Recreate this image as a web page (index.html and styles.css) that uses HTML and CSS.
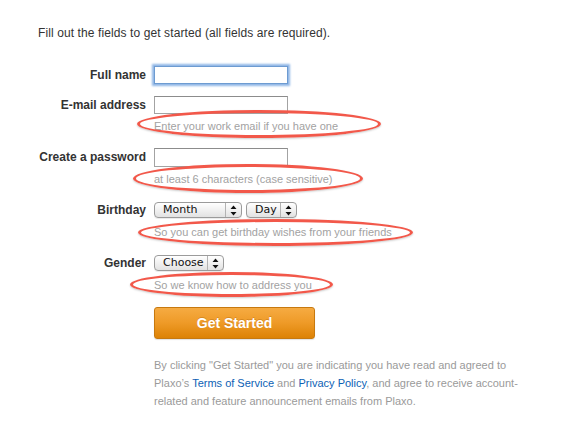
FILE: index.html
```html
<!DOCTYPE html>
<html>
<head>
<meta charset="utf-8">
<link rel="stylesheet" href="styles.css">
</head>
<body>
<div class="page">
  <p class="intro">Fill out the fields to get started (all fields are required).</p>
  <form class="form">
    <div class="row row-name">
      <label class="label">Full name</label>
      <div class="control"><input class="text-input focused" type="text"></div>
    </div>
    <div class="row row-email">
      <label class="label">E-mail address</label>
      <div class="control">
        <input class="text-input" type="text">
        <div class="hint">Enter your work email if you have one<span class="ring ring-email"></span></div>
      </div>
    </div>
    <div class="row row-pass">
      <label class="label">Create a password</label>
      <div class="control">
        <input class="text-input" type="password">
        <div class="hint">at least 6 characters (case sensitive)<span class="ring ring-pass"></span></div>
      </div>
    </div>
    <div class="row row-birth">
      <label class="label">Birthday</label>
      <div class="control">
        <div class="selects">
          <div class="select sel-month"><span class="sel-text">Month</span><span class="sel-arrow"><svg width="7" height="11" viewBox="0 0 7 11"><path d="M3.5 0.5 L6.5 4 H0.5 Z M3.5 10.5 L6.5 7 H0.5 Z" fill="#111"/></svg></span></div>
          <div class="select sel-day"><span class="sel-text">Day</span><span class="sel-arrow"><svg width="7" height="11" viewBox="0 0 7 11"><path d="M3.5 0.5 L6.5 4 H0.5 Z M3.5 10.5 L6.5 7 H0.5 Z" fill="#111"/></svg></span></div>
        </div>
        <div class="hint">So you can get birthday wishes from your friends<span class="ring ring-birth"></span></div>
      </div>
    </div>
    <div class="row row-gender">
      <label class="label">Gender</label>
      <div class="control">
        <div class="selects">
          <div class="select sel-gender"><span class="sel-text">Choose</span><span class="sel-arrow"><svg width="7" height="11" viewBox="0 0 7 11"><path d="M3.5 0.5 L6.5 4 H0.5 Z M3.5 10.5 L6.5 7 H0.5 Z" fill="#111"/></svg></span></div>
        </div>
        <div class="hint">So we know how to address you<span class="ring ring-gender"></span></div>
      </div>
    </div>
    <div class="row row-submit">
      <span class="label"></span>
      <div class="control">
        <button type="button" class="btn">Get Started</button>
        <p class="legal">By clicking "Get Started" you are indicating you have read and agreed to Plaxo’s <a href="#">Terms of Service</a> and <a href="#">Privacy Policy</a>, and agree to receive account-related and feature announcement emails from Plaxo.</p>
      </div>
    </div>
  </form>
</div>
</body>
</html>
```

FILE: styles.css
```css
* { box-sizing: border-box; }
html, body { margin: 0; padding: 0; background: #fff; }
body {
  font-family: "Liberation Sans", Arial, Helvetica, sans-serif;
  color: #333;
}
.page {
  padding: 26px 0 0 38px;
}
.intro {
  margin: 0 0 26px 0;
  font-size: 12px;
  line-height: 14px;
  letter-spacing: 0.1px;
  color: #333;
}
.form { margin: 0; }
.row {
  display: grid;
  grid-template-columns: 108px auto;
  column-gap: 8px;
  align-items: start;
}
.label {
  text-align: right;
  font-weight: bold;
  font-size: 12px;
  line-height: 18px;
  color: #333;
  white-space: nowrap;
}
.row-email { margin-top: 12px; }
.row-pass { margin-top: 15px; }
.row-birth { margin-top: 16px; }
.row-gender { margin-top: 16px; }
.row-submit { margin-top: 15px; }
.row-birth .label, .row-gender .label { line-height: 17px; }
.control { display: flex; flex-direction: column; align-items: flex-start; }
.text-input {
  display: block;
  width: 134px;
  height: 18px;
  margin: 0;
  border: 1px solid #a3a3a3;
  border-top-color: #8c8c8c;
  background: #fff;
  padding: 0 3px;
  font: 12px "Liberation Sans", Arial, sans-serif;
  outline: none;
}
.row-pass .text-input { height: 19px; }
.text-input.focused {
  border-color: #6d9bd1;
  box-shadow: 0 0 2px 2px #8fb6e6;
}
.hint {
  position: relative;
  font-size: 11px;
  line-height: 14px;
  color: #a2a2a2;
  white-space: nowrap;
}
.row-email .hint { margin-top: 5px; }
.row-pass .hint { margin-top: 5px; }
.row-birth .hint, .row-gender .hint { margin-top: 7px; }
.ring {
  position: absolute;
  border: 3px solid #f2584a;
  border-radius: 50%;
  box-shadow: 0 1px 2px rgba(0,0,0,0.2);
  pointer-events: none;
}
.ring-email { left: -17px; top: -9px; width: 244px; height: 28px; }
.ring-pass { left: -21px; top: -8px; width: 230px; height: 29px; }
.ring-birth { left: -16px; top: -6px; width: 275px; height: 27px; }
.ring-gender { left: -24px; top: -6px; width: 203px; height: 25px; }
.selects { display: flex; gap: 4px; }
.select {
  display: flex;
  align-items: stretch;
  height: 16px;
  border: 1px solid #9b9b9b;
  border-radius: 4px;
  background: linear-gradient(#ffffff, #f1f1f1 50%, #e2e2e2);
  box-shadow: 0 1px 0 rgba(0,0,0,0.08);
  font-family: "DejaVu Sans", "Liberation Sans", sans-serif;
  font-size: 11px;
  color: #111;
}
.sel-text {
  flex: 1;
  padding-left: 8px;
  line-height: 14px;
}
.sel-arrow {
  width: 16px;
  border-left: 1px solid #b3b3b3;
  display: flex;
  align-items: center;
  justify-content: center;
}
.sel-month { width: 88px; }
.sel-day { width: 51px; }
.sel-gender { width: 70px; }
.btn {
  display: block;
  width: 161px;
  height: 32px;
  margin: 0;
  border: 1px solid #c7790f;
  border-radius: 3px;
  background: linear-gradient(#f6ab42, #ee9a27 50%, #dd8205);
  color: #fff;
  font: bold 14px "Liberation Sans", Arial, sans-serif;
  text-shadow: 0 -1px 0 rgba(150,80,0,0.3);
  box-shadow: 0 1px 1px rgba(0,0,0,0.12);
  padding: 0;
}
.legal {
  margin: 17px 0 0 0;
  width: 370px;
  font-size: 11px;
  line-height: 18px;
  color: #9a9a9a;
}
.legal a {
  color: #0d5fb5;
  text-decoration: none;
}
```
